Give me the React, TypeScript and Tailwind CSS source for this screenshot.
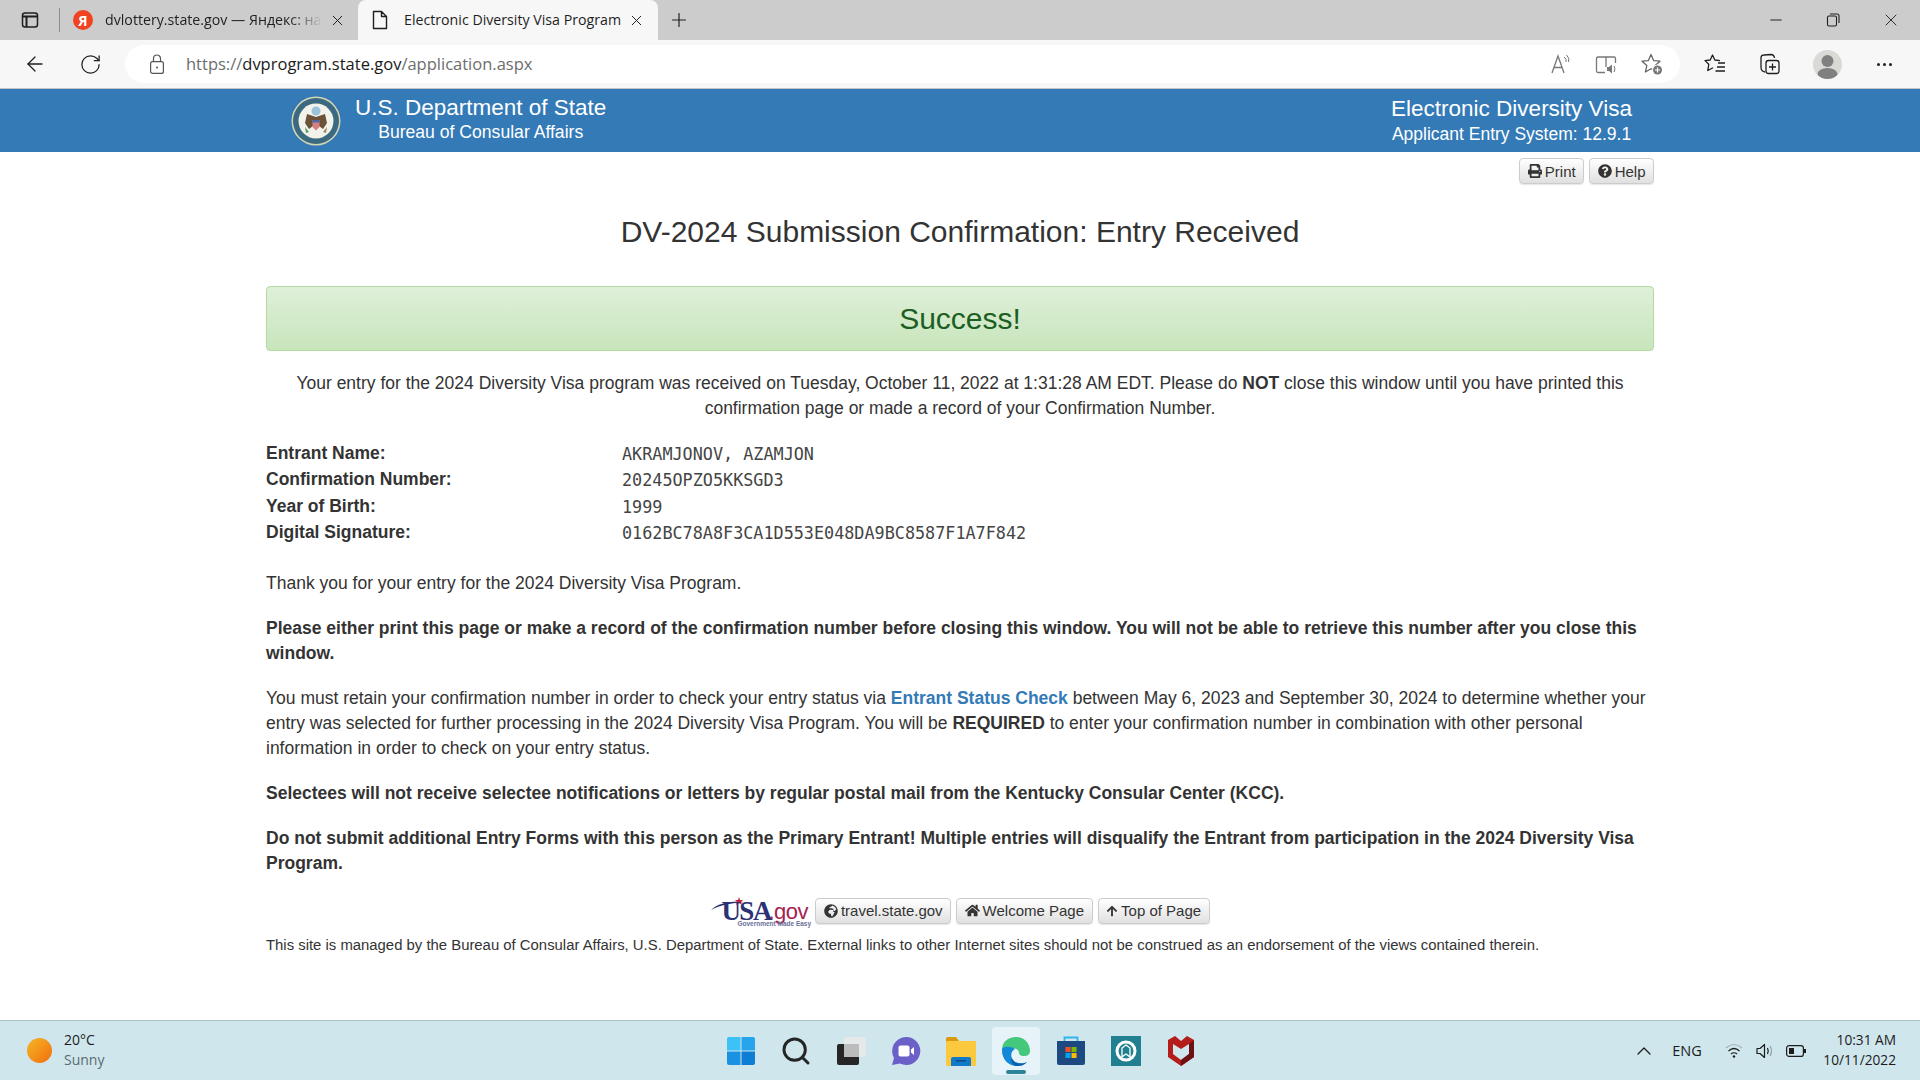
import { ArrowLeft, ChevronUp, Minus, Plus, RotateCw, Search, X } from 'lucide-react'
import { FaArrowUp, FaGlobeAfrica, FaHome, FaPrint, FaQuestionCircle } from 'react-icons/fa'
import type { ReactNode } from 'react'

const PageButton = ({ icon, label }: { icon: ReactNode; label: string }) => (
  <button className="flex h-[26px] items-center gap-[3px] rounded-[4px] border border-[#cccccc] bg-gradient-to-b from-white to-[#e0e0e0] px-[7.5px] text-[15px] text-[#333333] shadow-[0_1px_1px_rgba(0,0,0,0.1)]">
    {icon}
    {label}
  </button>
)

const Seal = () => (
  <svg width="50" height="50" viewBox="0 0 50 50">
    <circle cx="25" cy="25" r="24.5" fill="#d3d6b4" />
    <circle cx="25" cy="25" r="23" fill="#3b6a80" />
    <circle cx="25" cy="25" r="17.5" fill="#f1f2ea" />
    <circle cx="25" cy="15" r="4.5" fill="#9cc3dc" />
    <path d="M25 21 L16 18 L14 27 L18 33 L22 30 L25 33 L28 30 L32 33 L36 27 L34 18 Z" fill="#6b5238" />
    <path d="M21.5 24 H28.5 V31 L25 34.5 L21.5 31 Z" fill="#d77f85" />
    <path d="M21.5 24 H28.5 V26.5 H21.5 Z" fill="#4a6aa5" />
    <path d="M14 31 L18 36 L15 37 Z" fill="#5b9a62" />
    <path d="M36 31 L32 36 L35 37 Z" fill="#9a8660" />
  </svg>
)

const UsaGovLogo = () => (
  <div className="relative h-[30px] w-[100px] shrink-0">
    <svg className="absolute left-0 top-0" width="100" height="30" viewBox="0 0 100 30">
      <path d="M1 14 C8 7 20 5 34 6 C22 7 10 9 1 14 Z" fill="#2b3273" />
      <path d="M29 1 l1 3 3 0 -2 2 1 3 -3 -2 -3 2 1 -3 -2 -2 3 0 Z" fill="#c8203a" />
    </svg>
    <span className="absolute left-[11px] top-[0px] font-['Liberation_Serif',serif] text-[27px] font-bold leading-[30px] tracking-[-1.5px] text-[#2b3273]">
      USA
    </span>
    <span className="absolute left-[58px] top-[4px] text-[22px] leading-[24px] tracking-[-0.5px] text-[#a5234f]">
      .gov
    </span>
    <span className="absolute left-[27px] top-[25px] whitespace-nowrap text-[6.5px] font-bold leading-[6px] text-[#6a6f99]">
      Government Made Easy
    </span>
  </div>
)

const ChromeIcon = ({ children, className }: { children: ReactNode; className?: string }) => (
  <svg width="24" height="24" viewBox="0 0 24 24" fill="none" stroke="currentColor" strokeWidth="1.3" className={className}>
    {children}
  </svg>
)

const TabStrip = () => (
  <div className="flex h-10 shrink-0 items-end bg-[#cccccc] text-[14.2px] text-[#1f1f1f]">
    <div className="flex h-10 w-[59px] items-center justify-center">
      <ChromeIcon>
        <rect x="4.5" y="5" width="15" height="14" rx="2.5" strokeWidth="1.5" />
        <path d="M4.5 8.5 H19.5 M8.5 8.5 V19" strokeWidth="2" />
      </ChromeIcon>
    </div>
    <div className="mb-[8px] h-[24px] w-px bg-[#8f8f8f]" />
    <div className="flex h-10 w-[298px] items-center pl-[13px]">
      <div className="flex h-5 w-5 shrink-0 items-center justify-center rounded-full bg-[#f0431f] text-[14px] font-bold text-white">Я</div>
      <span className="ml-[12px] w-[217px] overflow-hidden whitespace-nowrap bg-gradient-to-r from-[#1f1f1f] from-[85%] to-[#cccccc] bg-clip-text text-transparent">
        dvlottery.state.gov — Яндекс: на
      </span>
      <X size={17} strokeWidth={1.4} className="ml-[7px]" />
    </div>
    <div className="flex h-10 w-[300px] items-center rounded-t-[8px] bg-[#f7f7f7] pl-[12px]">
      <svg width="20" height="24" viewBox="0 0 20 24" fill="none" stroke="currentColor" strokeWidth="1.4">
        <path d="M3.5 3.5 H11.5 L16.5 8.5 V20.5 H3.5 Z M11.5 3.5 V8.5 H16.5" strokeLinejoin="round" />
      </svg>
      <span className="ml-[14px] w-[220px] whitespace-nowrap">Electronic Diversity Visa Program</span>
      <X size={17} strokeWidth={1.4} className="ml-[4px]" />
    </div>
    <div className="flex h-10 w-[42px] items-center justify-center">
      <Plus size={22} strokeWidth={1.3} />
    </div>
    <div className="flex-1" />
    <div className="flex h-10 items-center pr-[19px]">
      <Minus size={18} strokeWidth={1.3} className="mr-[40px]" />
      <svg width="16" height="16" viewBox="0 0 16 16" fill="none" stroke="currentColor" strokeWidth="1.1" className="mr-[40px]">
        <rect x="2.5" y="4" width="9" height="10" rx="1.5" />
        <path d="M5 2 H12 Q14 2 14 4 V11" />
      </svg>
      <X size={20} strokeWidth={1.1} />
    </div>
  </div>
)

const Toolbar = () => (
  <div className="flex h-[49px] shrink-0 items-start border-b border-[#c4c4c4] bg-[#f7f7f7] pt-[5px] text-[#1f1f1f]">
    <div className="flex h-[38px] w-[125px] items-center pl-[23px]">
      <ArrowLeft size={24} strokeWidth={1.3} />
      <RotateCw size={23} strokeWidth={1.3} className="ml-[32px]" />
    </div>
    <div className="flex h-[38px] w-[1555px] items-center rounded-full bg-white pl-[23px] pr-[16px]">
      <svg width="18" height="22" viewBox="0 0 18 22" fill="none" stroke="#555555" strokeWidth="1.2">
        <rect x="2.6" y="8.6" width="12.8" height="11.8" rx="2" />
        <path d="M5.5 8.5 V5.5 A3.5 3.5 0 0 1 12.5 5.5 V8.5" />
        <circle cx="9" cy="14.5" r="1" fill="#555555" stroke="none" />
      </svg>
      <span className="ml-[20px] text-[16.5px] text-[#6d6d6d]">
        https://<span className="text-[#1a1a1a]">dvprogram.state.gov</span>/application.aspx
      </span>
      <div className="flex-1" />
      <ChromeIcon className="text-[#777777]">
        <path d="M3 21 L9 4 L15 21 M5.2 15.5 H12.8" />
        <path d="M15 5 Q18 7 17 10 M17.5 3 Q21 6 19.5 10" strokeWidth="1" />
      </ChromeIcon>
      <ChromeIcon className="ml-[21px] text-[#777777]">
        <path d="M12 5 H4 Q2.5 5 2.5 6.5 V19 Q2.5 20.5 4 20.5 H11 M12 5 H20 Q21.5 5 21.5 6.5 V11 M12 5 V15" />
        <path d="M13 15 H15 L18 12.5 V21.5 L15 19 H13 Z" fill="currentColor" stroke="none" />
        <path d="M20 14 Q22 17 20 20" strokeWidth="1" />
      </ChromeIcon>
      <ChromeIcon className="ml-[22px] text-[#666666]">
        <path d="M11 2.5 L13.6 8.6 L20 9.2 L15.2 13.6 L16.6 20 L11 16.7 L5.4 20 L6.8 13.6 L2 9.2 L8.4 8.6 Z" strokeLinejoin="round" />
        <circle cx="17.5" cy="18" r="5.5" fill="#ffffff" stroke="none" />
        <circle cx="17.5" cy="18" r="4.5" fill="#777777" stroke="none" />
        <path d="M17.5 15.5 V20.5 M15 18 H20" stroke="#ffffff" strokeWidth="1.2" />
      </ChromeIcon>
    </div>
    <div className="flex h-[38px] flex-1 items-center pl-[23px]">
      <ChromeIcon>
        <path d="M17 8.6 L11.8 8 L9.5 3 L7.2 8 L2 8.6 L5.8 12.2 L4.8 18.5 L10 15.7" strokeLinejoin="round" />
        <path d="M15 11 H22 M14 15 H22 M12.5 19 H22" />
      </ChromeIcon>
      <ChromeIcon className="ml-[31px]">
        <rect x="8" y="8.5" width="13" height="13" rx="2.5" />
        <path d="M14.5 11.5 V18.5 M11 15 H18" />
        <path d="M7 20 Q3.5 19.5 3 16 L3 6 Q3 3 6 3 L13 2.5 Q16 2.5 16.5 6" />
      </ChromeIcon>
      <div className="ml-[31px] flex h-[29px] w-[29px] items-center justify-center overflow-hidden rounded-full bg-[#d9d9d5]">
        <svg width="29" height="29" viewBox="0 0 29 29" fill="#808080">
          <circle cx="14.5" cy="11" r="6" />
          <ellipse cx="14.5" cy="24" rx="10" ry="6" />
        </svg>
      </div>
      <div className="ml-[35px] flex gap-[3px]">
        <span className="h-[3px] w-[3px] rounded-full bg-[#1f1f1f]" />
        <span className="h-[3px] w-[3px] rounded-full bg-[#1f1f1f]" />
        <span className="h-[3px] w-[3px] rounded-full bg-[#1f1f1f]" />
      </div>
    </div>
  </div>
)

const SiteHeader = () => (
  <div className="flex h-[63px] shrink-0 items-center justify-between bg-[#337ab7] pl-[291px] pr-[288px] text-white">
    <div className="flex items-center gap-[14px]">
      <Seal />
      <div className="mt-[-3px] text-center">
        <div className="text-[22.5px] leading-[27px]">U.S. Department of State</div>
        <div className="text-[17.6px] leading-[23px]">Bureau of Consular Affairs</div>
      </div>
    </div>
    <div className="mt-[0px] text-center">
      <div className="text-[22.5px] leading-[27px]">Electronic Diversity Visa</div>
      <div className="text-[17.5px] leading-[24px]">Applicant Entry System: 12.9.1</div>
    </div>
  </div>
)

const entryDetails = [
  { label: 'Entrant Name:', value: 'AKRAMJONOV, AZAMJON' },
  { label: 'Confirmation Number:', value: '20245OPZO5KKSGD3' },
  { label: 'Year of Birth:', value: '1999' },
  { label: 'Digital Signature:', value: '0162BC78A8F3CA1D553E048DA9BC8587F1A7F842' },
]

const Confirmation = () => (
  <div className="mx-auto w-[1388px] pt-[6px] text-[17.5px] leading-[25px] text-[#333333]">
    <div className="flex justify-end gap-[5px]">
      <PageButton icon={<FaPrint size={14} />} label="Print" />
      <PageButton icon={<FaQuestionCircle size={14} />} label="Help" />
    </div>
    <h1 className="mt-[31px] text-center text-[30px] leading-[33px]">DV-2024 Submission Confirmation: Entry Received</h1>
    <div className="mt-[38px] flex h-[65px] items-center justify-center rounded-[4px] border border-[#b2dba1] bg-gradient-to-b from-[#dff0d8] to-[#c8e5bc] text-[30px] text-[#1d5e24]">
      Success!
    </div>
    <p className="mt-[20px] text-center">
      Your entry for the 2024 Diversity Visa program was received on Tuesday, October 11, 2022 at 1:31:28 AM EDT. Please do <b>NOT</b> close this window until you have printed this confirmation page or made a record of your Confirmation Number.
    </p>
    <div className="mt-[19px] grid grid-cols-[356px_1fr]">
      {entryDetails.map((row) => (
        <div key={row.label} className="col-span-2 grid h-[26.4px] grid-cols-subgrid items-center">
          <b>{row.label}</b>
          <span className="mt-[2px] font-['DejaVu_Sans_Mono',monospace] text-[16.8px] text-[#444444]">{row.value}</span>
        </div>
      ))}
    </div>
    <p className="mt-[25px]">Thank you for your entry for the 2024 Diversity Visa Program.</p>
    <p className="mt-[20px] font-bold">
      Please either print this page or make a record of the confirmation number before closing this window. You will not be able to retrieve this number after you close this window.
    </p>
    <p className="mt-[20px]">
      You must retain your confirmation number in order to check your entry status via <b className="text-[#337ab7]">Entrant Status Check</b> between May 6, 2023 and September 30, 2024 to determine whether your entry was selected for further processing in the 2024 Diversity Visa Program. You will be <b>REQUIRED</b> to enter your confirmation number in combination with other personal information in order to check on your entry status.
    </p>
    <p className="mt-[20px] font-bold">
      Selectees will not receive selectee notifications or letters by regular postal mail from the Kentucky Consular Center (KCC).
    </p>
    <p className="mt-[20px] font-bold">
      Do not submit additional Entry Forms with this person as the Primary Entrant! Multiple entries will disqualify the Entrant from participation in the 2024 Diversity Visa Program.
    </p>
    <div className="mt-[20px] flex items-center justify-center gap-[5px]">
      <UsaGovLogo />
      <PageButton icon={<FaGlobeAfrica size={14} />} label="travel.state.gov" />
      <PageButton icon={<FaHome size={15} />} label="Welcome Page" />
      <PageButton icon={<FaArrowUp size={12} />} label="Top of Page" />
    </div>
    <p className="mt-[9px] text-[14.88px] leading-[20px]">
      This site is managed by the Bureau of Consular Affairs, U.S. Department of State. External links to other Internet sites should not be construed as an endorsement of the views contained therein.
    </p>
  </div>
)

const TaskIcon = ({ children, active }: { children: ReactNode; active?: boolean }) => (
  <div className="relative flex h-[48px] w-[55px] items-center justify-center">
    {active ? (
      <div className="absolute inset-y-0 left-[3.5px] right-[3.5px] rounded-[4px] bg-[#e6f3f8]">
        <div className="absolute bottom-[1px] left-[14px] h-[4px] w-[20px] rounded-full bg-[#2b8597]" />
      </div>
    ) : null}
    <div className="relative">{children}</div>
  </div>
)

const Taskbar = () => (
  <div className="flex h-[60px] shrink-0 items-center border-t border-[#a9bec8] bg-[#cfe6ec] font-['Open_Sans',sans-serif] text-[14px] text-[#1c1c1c]">
    <div className="flex flex-1 items-center pl-[27px]">
      <div className="h-[25px] w-[25px] rounded-full bg-gradient-to-br from-[#f2b727] to-[#f26c0a]" />
      <div className="ml-[12px] mt-[-2px] leading-[20px]">
        <div>20°C</div>
        <div className="text-[#5b6b72]">Sunny</div>
      </div>
    </div>
    <div className="mr-[2px] flex items-center">
      <TaskIcon>
        <svg width="30" height="30" viewBox="0 0 30 30">
          <path d="M1 3 Q1 1 3 1 H14.5 V14.5 H1 Z" fill="#3cc2f7" />
          <path d="M15.5 1 H27 Q29 1 29 3 V14.5 H15.5 Z" fill="#27a5ec" />
          <path d="M1 15.5 H14.5 V29 H3 Q1 29 1 27 Z" fill="#1a92e2" />
          <path d="M15.5 15.5 H29 V27 Q29 29 27 29 H15.5 Z" fill="#0f7cd5" />
        </svg>
      </TaskIcon>
      <TaskIcon>
        <Search size={32} strokeWidth={2.2} className="text-[#252525]" />
      </TaskIcon>
      <TaskIcon>
        <svg width="30" height="30" viewBox="0 0 30 30">
          <rect x="1" y="8" width="22" height="21" rx="2" fill="#262626" />
          <rect x="8" y="1" width="22" height="20" rx="2" fill="#e9e9e9" fillOpacity="0.85" />
          <rect x="8" y="8" width="15" height="13" fill="#bcbcbc" />
        </svg>
      </TaskIcon>
      <TaskIcon>
        <svg width="30" height="30" viewBox="0 0 30 30">
          <path d="M15 1 A14 14 0 1 1 9 27.5 L1 29 L3 22 A14 14 0 0 1 15 1 Z" fill="#6b5fc8" />
          <rect x="7.5" y="9.5" width="11" height="11" rx="2" fill="#ffffff" />
          <path d="M20 13.5 L23 11 V19 L20 16.5 Z" fill="#ffffff" />
        </svg>
      </TaskIcon>
      <TaskIcon>
        <svg width="30" height="30" viewBox="0 0 30 30">
          <path d="M0 3 Q0 1 2 1 H10 L13 5 H30 V8 H0 Z" fill="#d99a0b" />
          <rect x="0" y="5" width="30" height="25" rx="1" fill="#fbc93e" />
          <path d="M5 23 Q5 21 7 21 H23 Q25 21 25 23 V30 H5 Z" fill="#1079c9" />
          <rect x="10" y="24" width="10" height="1.5" fill="#0b4d85" />
        </svg>
      </TaskIcon>
      <TaskIcon active>
        <svg width="30" height="30" viewBox="0 0 30 30">
          <path d="M1 14 C1 6 7 1 15 1 C23 1 29 7 29 15 C29 19 26 20 23 20 C19 20 18 18 18 17 C18 13 13 11 9 13 C5 14.5 3 18 3 21 C1.5 19 1 16.5 1 14 Z" fill="#45c77c" />
          <path d="M1 14 C1 23 7 30 16 30 C20 30 23 29 26 26 C22 28 15 28 12 24 C9 20 10 15 14 13 C10 10 1 10 1 14 Z" fill="#1188d8" />
          <path d="M12 24 C14 28 21 28.5 26 26 C23 29 20 30 16 30 C13 30 10 27 10 22 Z" fill="#0d5ea8" />
        </svg>
      </TaskIcon>
      <TaskIcon>
        <svg width="30" height="30" viewBox="0 0 30 30">
          <path d="M8.5 5 V1.5 H21.5 V5" fill="none" stroke="#30b5ee" strokeWidth="1.8" />
          <path d="M1 5 H29 V27 Q29 29 27 29 H3 Q1 29 1 27 Z" fill="#1c4a80" />
          <rect x="9.5" y="11" width="5" height="5" fill="#f25022" />
          <rect x="15.5" y="11" width="5" height="5" fill="#7fba00" />
          <rect x="9.5" y="17" width="5" height="5" fill="#00a4ef" />
          <rect x="15.5" y="17" width="5" height="5" fill="#ffb900" />
        </svg>
      </TaskIcon>
      <TaskIcon>
        <svg width="30" height="30" viewBox="0 0 30 30">
          <rect width="30" height="30" fill="#21808f" />
          <circle cx="15" cy="15" r="9" fill="none" stroke="#ffffff" strokeWidth="3" />
          <path d="M11 21 V12 L15 9 L19 12 V21 L15 18 Z" fill="none" stroke="#ffffff" strokeWidth="1.3" />
        </svg>
      </TaskIcon>
      <TaskIcon>
        <svg width="26" height="30" viewBox="0 0 26 30">
          <path d="M0 4 L7 0 L13 5 L19 0 L26 4 V21 L13 30 L0 21 Z" fill="#b51c1c" />
          <path d="M5 8 L13 13 L21 8 V18 L13 24 L5 18 Z" fill="#cfe6ec" />
          <path d="M26 4 V21 L13 30 V24 L21 18 V8 Z" fill="#6d1212" />
        </svg>
      </TaskIcon>
    </div>
    <div className="flex flex-1 items-center justify-end pr-[24px]">
      <ChevronUp size={24} strokeWidth={1.3} />
      <span className="ml-[16px] text-[14.5px]">ENG</span>
      <svg width="18" height="16" viewBox="0 0 18 16" fill="none" stroke="#1c1c1c" strokeWidth="1.2" className="ml-[23px]">
        <path d="M1 5 Q9 -2 17 5" stroke="#9db0b6" />
        <path d="M3.5 8 Q9 3 14.5 8" />
        <path d="M6 11 Q9 8.5 12 11" />
        <circle cx="9" cy="13.5" r="1.2" fill="#1c1c1c" stroke="none" />
      </svg>
      <svg width="20" height="16" viewBox="0 0 20 16" fill="none" stroke="#1c1c1c" strokeWidth="1.2" className="ml-[13px]">
        <path d="M1 5.5 H4 L8.5 1.5 V14.5 L4 10.5 H1 Z" strokeLinejoin="round" />
        <path d="M11.5 5 Q13 8 11.5 11" />
        <path d="M14 3 Q17 8 14 13" stroke="#8fa3a9" />
      </svg>
      <svg width="21" height="12" viewBox="0 0 21 12" fill="none" stroke="#1c1c1c" strokeWidth="1.2" className="ml-[10.5px]">
        <rect x="0.6" y="0.6" width="16.8" height="10.8" rx="2.5" />
        <rect x="3" y="3" width="5" height="6" fill="#1c1c1c" stroke="none" />
        <path d="M19 4 V8" strokeWidth="2" />
      </svg>
      <div className="ml-[16px] mt-[-2px] text-right text-[13.7px] leading-[20px]">
        <div>10:31 AM</div>
        <div>10/11/2022</div>
      </div>
    </div>
  </div>
)

const App = () => {
  return (
    <div className="flex h-screen w-full flex-col overflow-hidden bg-white font-['Liberation_Sans',Arial,sans-serif]">
      <div className="font-['Open_Sans',sans-serif]">
        <TabStrip />
        <Toolbar />
      </div>
      <SiteHeader />
      <div className="min-h-0 flex-1 overflow-hidden">
        <Confirmation />
      </div>
      <Taskbar />
    </div>
  )
}

export default App
